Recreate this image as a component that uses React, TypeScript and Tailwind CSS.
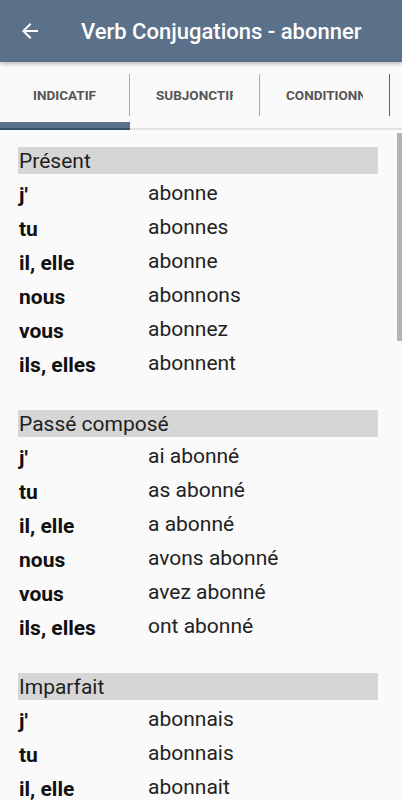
import React from "react";

const FONT = { fontFamily: "Roboto, 'Noto Sans', sans-serif" };

const TABS = ["INDICATIF", "SUBJONCTIF", "CONDITIONNEL"];

const PRONOUNS = ["j'", "tu", "il, elle", "nous", "vous", "ils, elles"];

const TENSES = [
  {
    name: "Présent",
    forms: ["abonne", "abonnes", "abonne", "abonnons", "abonnez", "abonnent"],
  },
  {
    name: "Passé composé",
    forms: ["ai abonné", "as abonné", "a abonné", "avons abonné", "avez abonné", "ont abonné"],
  },
  {
    name: "Imparfait",
    forms: ["abonnais", "abonnais", "abonnait", "abonnions", "abonniez", "abonnaient"],
  },
];

function BackArrow() {
  return (
    <svg viewBox="0 0 24 24" className="w-6 h-6" fill="white">
      <path d="M20 11H7.83l5.59-5.59L12 4l-8 8 8 8 1.41-1.41L7.83 13H20v-2z" />
    </svg>
  );
}

function Section({ name, forms }: { name: string; forms: string[] }) {
  return (
    <div className="mb-[32px]">
      <div className="h-[27px] w-[360px] bg-[#d6d6d6] pl-px text-[21px] leading-[29px] text-[#1f1f1f]">
        {name}
      </div>
      {forms.map((f, i) => (
        <div key={i} className="flex h-[34px]">
          <span className="w-[130px] pl-px pt-[4px] text-[21px] font-bold leading-[34px] text-[#111]">
            {PRONOUNS[i]}
          </span>
          <span className="pt-[2px] text-[21px] leading-[34px] text-[#222]">{f}</span>
        </div>
      ))}
    </div>
  );
}

export default function App() {
  return (
    <div className="relative h-[800px] w-[402px] overflow-hidden bg-[#fafafa]" style={FONT}>
      <header className="relative z-10 flex h-[62px] items-center bg-[#5b7089] shadow-[0_2px_4px_rgba(0,0,0,0.25)]">
        <div className="ml-[18px]">
          <BackArrow />
        </div>
        <h1 className="ml-[39px] text-[22px] font-medium text-white">Verb Conjugations - abonner</h1>
      </header>

      <nav className="relative flex h-[68px] border-b-2 border-[#e2e2e2] bg-[#fafafa]">
        {TABS.map((t, i) => (
          <div key={t} className="flex w-[130px] shrink-0 items-center">
            <div className="w-[129px] px-[26px] pt-px">
              <div className="overflow-hidden whitespace-nowrap text-center text-[13.5px] font-bold text-[#555]">
                {t}
              </div>
            </div>
            <div className={`h-[42px] w-px ${i === 2 ? "bg-[#4d6585]" : "bg-[#a3adba]"}`} />
          </div>
        ))}
        <div className="absolute bottom-[-2px] left-0 h-[8px] w-[130px] border-b-2 border-[#35506f] bg-[#5b7089]" />
      </nav>

      <main className="relative px-[18px] pt-[17px]">
        {TENSES.map((t) => (
          <Section key={t.name} name={t.name} forms={t.forms} />
        ))}
      </main>

      <div className="absolute right-0 top-[133px] h-[208px] w-[5px] bg-[#b4b4b4]" />
    </div>
  );
}
